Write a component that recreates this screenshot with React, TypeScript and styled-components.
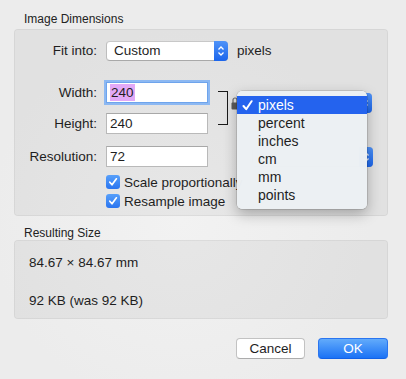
import React from 'react'
import styled, { createGlobalStyle } from 'styled-components'

const GlobalStyle = createGlobalStyle`
  html, body {
    margin: 0;
    padding: 0;
    background: #ececec;
  }
  * {
    box-sizing: border-box;
  }
`

const Window = styled.div`
  width: 406px;
  height: 379px;
  overflow: hidden;
  padding: 12px 18px 0 14px;
  display: flex;
  flex-direction: column;
  font-family: 'Liberation Sans', Arial, sans-serif;
  color: #1e1e1e;
  background: radial-gradient(circle at 180px 220px, #f2f2f2 0, #ececec 190px);
`

const SectionLabel = styled.div<{ $top?: number }>`
  font-size: 12px;
  line-height: 14px;
  padding-left: 10px;
  color: #222;
  margin-top: ${(p) => p.$top ?? 0}px;
`

const Panel = styled.div<{ $height: number; $top: number }>`
  position: relative;
  height: ${(p) => p.$height}px;
  margin-top: ${(p) => p.$top}px;
  border-radius: 4px;
  border: 1px solid rgba(0, 0, 0, 0.05);
  background: rgba(0, 0, 0, 0.045);
  font-size: 13.5px;
`

const FormBody = styled.div`
  display: flex;
  flex-direction: column;
  padding-top: 10px;
`

const Row = styled.div<{ $top?: number }>`
  display: flex;
  align-items: center;
  height: 21px;
  margin-top: ${(p) => p.$top ?? 0}px;
`

const Label = styled.div`
  width: 82px;
  margin-right: 9px;
  text-align: right;
`

const Field = styled.div<{ $focused?: boolean }>`
  width: 102px;
  height: 21px;
  background: #fff;
  border: 1px solid ${(p) => (p.$focused ? '#6ea4ec' : '#b9b9b9')};
  border-top-color: ${(p) => (p.$focused ? '#6ea4ec' : '#a8a8a8')};
  box-shadow: ${(p) => (p.$focused ? '0 0 0 2px #8cb8f2' : 'none')};
  padding-left: 3px;
  display: flex;
  align-items: center;
`

const Selected = styled.span`
  background: #e2a9f7;
  padding: 1px 1px;
`

const Popup = styled.div<{ $width: number; $left?: number }>`
  width: ${(p) => p.$width}px;
  height: 20px;
  margin-left: ${(p) => p.$left ?? 0}px;
  display: flex;
  background: #fff;
  border: 1px solid #bdbdbd;
  border-top-color: #c8c8c8;
  border-bottom-color: #a9a9a9;
  border-radius: 4px;
`

const PopupText = styled.div`
  flex: 1;
  padding-left: 7px;
  display: flex;
  align-items: center;
`

const Stepper = styled.div`
  width: 14px;
  flex: none;
  margin: -1px -1px -1px 0;
  background: linear-gradient(#4f93f8, #1b65ec);
  border-radius: 0 4px 4px 0;
  display: flex;
  align-items: center;
  justify-content: center;
`

const UnitText = styled.div`
  margin-left: 9px;
`

const SizeGroup = styled.div`
  display: flex;
  align-items: flex-start;
  margin-top: 21px;
`

const FieldColumn = styled.div`
  display: flex;
  flex-direction: column;
  gap: 10px;
`

const Bracket = styled.div`
  width: 10px;
  height: 34px;
  margin: 9px 0 0 10px;
  border: 1px solid #1a1a1a;
  border-left: none;
`

const LockBox = styled.div`
  margin: 14px 0 0 3px;
  width: 8px;
  height: 14px;
`

const UnitPopupSlot = styled.div`
  margin-top: 11px;
`

const CheckList = styled.div`
  display: flex;
  flex-direction: column;
  gap: 5px;
  margin: 8px 0 0 91px;
`

const CheckRow = styled.div`
  display: flex;
  align-items: center;
  height: 14px;
  gap: 4px;
  white-space: nowrap;
`

const CheckBox = styled.div`
  width: 14px;
  height: 14px;
  border-radius: 3px;
  background: linear-gradient(#58a0fa, #2a75f0);
  display: flex;
  align-items: center;
  justify-content: center;
`

const Menu = styled.div`
  position: absolute;
  left: 222px;
  top: 61px;
  width: 130px;
  padding: 5px 0;
  background: rgba(236, 240, 243, 0.99);
  border-radius: 5px;
  box-shadow: 0 0 0 0.5px rgba(0, 0, 0, 0.22), 0 5px 14px rgba(0, 0, 0, 0.28);
  font-size: 14px;
`

const MenuItem = styled.div<{ $active?: boolean }>`
  position: relative;
  height: 18px;
  line-height: 18px;
  padding-left: 21px;
  color: ${(p) => (p.$active ? '#fff' : '#1e1e1e')};
  background: ${(p) => (p.$active ? '#2463ee' : 'transparent')};
`

const CheckMark = styled.span`
  position: absolute;
  left: 5px;
  top: 4px;
  width: 11px;
  height: 11px;
  display: flex;
`

const ResultText = styled.div<{ $top: number }>`
  padding-left: 14px;
  margin-top: ${(p) => p.$top}px;
  font-size: 13.5px;
  line-height: 16px;
`

const Buttons = styled.div`
  display: flex;
  justify-content: flex-end;
  gap: 13px;
  margin-top: 19px;
`

const Button = styled.button<{ $primary?: boolean }>`
  height: 21px;
  width: ${(p) => (p.$primary ? 70 : 69)}px;
  padding: 0;
  font-family: 'Liberation Sans', Arial, sans-serif;
  font-size: 13.5px;
  border-radius: 4px;
  border: 1px solid ${(p) => (p.$primary ? '#2a75f0' : '#c2c2c2')};
  border-bottom-color: ${(p) => (p.$primary ? '#1261e6' : '#acacac')};
  color: ${(p) => (p.$primary ? '#fff' : '#1e1e1e')};
  background: ${(p) => (p.$primary ? 'linear-gradient(#62abfb, #1b72f5)' : '#fff')};
`

const Chevrons = () => (
  <svg width="8" height="12" viewBox="0 0 8 12">
    <path d="M1.5 4.5 L4 2 L6.5 4.5 M1.5 7.5 L4 10 L6.5 7.5" fill="none" stroke="#fff" strokeWidth="1.3" />
  </svg>
)

const Tick = () => (
  <svg width="10" height="10" viewBox="0 0 10 10">
    <path d="M1.8 5.2 L4 7.8 L8.4 1.8" fill="none" stroke="#fff" strokeWidth="1.7" strokeLinecap="round" strokeLinejoin="round" />
  </svg>
)

const MenuTick = () => (
  <svg width="11" height="11" viewBox="0 0 11 11">
    <path d="M1.5 6 L4.2 9.2 L9.6 1.2" fill="none" stroke="#fff" strokeWidth="2" strokeLinecap="round" strokeLinejoin="round" />
  </svg>
)

const Lock = () => (
  <svg width="8" height="14" viewBox="0 0 8 14">
    <path d="M2 7 V4 a2 2 0 0 1 4 0 V7" fill="none" stroke="#6a6a6a" strokeWidth="1.2" />
    <rect x="0.5" y="6.5" width="7" height="7" rx="1" fill="#5a5a5a" />
  </svg>
)

// the unit pop-ups sit under the open menu, only their stepper end shows
const UnitPopup = ({ left }: { left: number }) => (
  <Popup $width={121} $left={left}>
    <PopupText />
    <Stepper>
      <Chevrons />
    </Stepper>
  </Popup>
)

const units = ['pixels', 'percent', 'inches', 'cm', 'mm', 'points']

const App: React.FC = () => {
  return (
    <Window>
      <GlobalStyle />
      <SectionLabel>Image Dimensions</SectionLabel>
      <Panel $height={187} $top={3}>
        <FormBody>
          <Row>
            <Label>Fit into:</Label>
            <Popup $width={122}>
              <PopupText>Custom</PopupText>
              <Stepper>
                <Chevrons />
              </Stepper>
            </Popup>
            <UnitText>pixels</UnitText>
          </Row>
          <SizeGroup>
            <FieldColumn>
              <Row>
                <Label>Width:</Label>
                <Field $focused>
                  <Selected>240</Selected>
                </Field>
              </Row>
              <Row>
                <Label>Height:</Label>
                <Field>240</Field>
              </Row>
            </FieldColumn>
            <Bracket />
            <LockBox>
              <Lock />
            </LockBox>
            <UnitPopupSlot>
              <UnitPopup left={12} />
            </UnitPopupSlot>
          </SizeGroup>
          <Row $top={12}>
            <Label>Resolution:</Label>
            <Field>72</Field>
            <UnitPopup left={44} />
          </Row>
          <CheckList>
            <CheckRow>
              <CheckBox>
                <Tick />
              </CheckBox>
              Scale proportionally
            </CheckRow>
            <CheckRow>
              <CheckBox>
                <Tick />
              </CheckBox>
              Resample image
            </CheckRow>
          </CheckList>
        </FormBody>
        <Menu>
          {units.map((u, i) => (
            <MenuItem key={u} $active={i === 0}>
              {i === 0 && (
                <CheckMark>
                  <MenuTick />
                </CheckMark>
              )}
              {u}
            </MenuItem>
          ))}
        </Menu>
      </Panel>
      <SectionLabel $top={10}>Resulting Size</SectionLabel>
      <Panel $height={79} $top={0}>
        <ResultText $top={14}>84.67 × 84.67 mm</ResultText>
        <ResultText $top={22}>92 KB (was 92 KB)</ResultText>
      </Panel>
      <Buttons>
        <Button>Cancel</Button>
        <Button $primary>OK</Button>
      </Buttons>
    </Window>
  )
}

export default App
